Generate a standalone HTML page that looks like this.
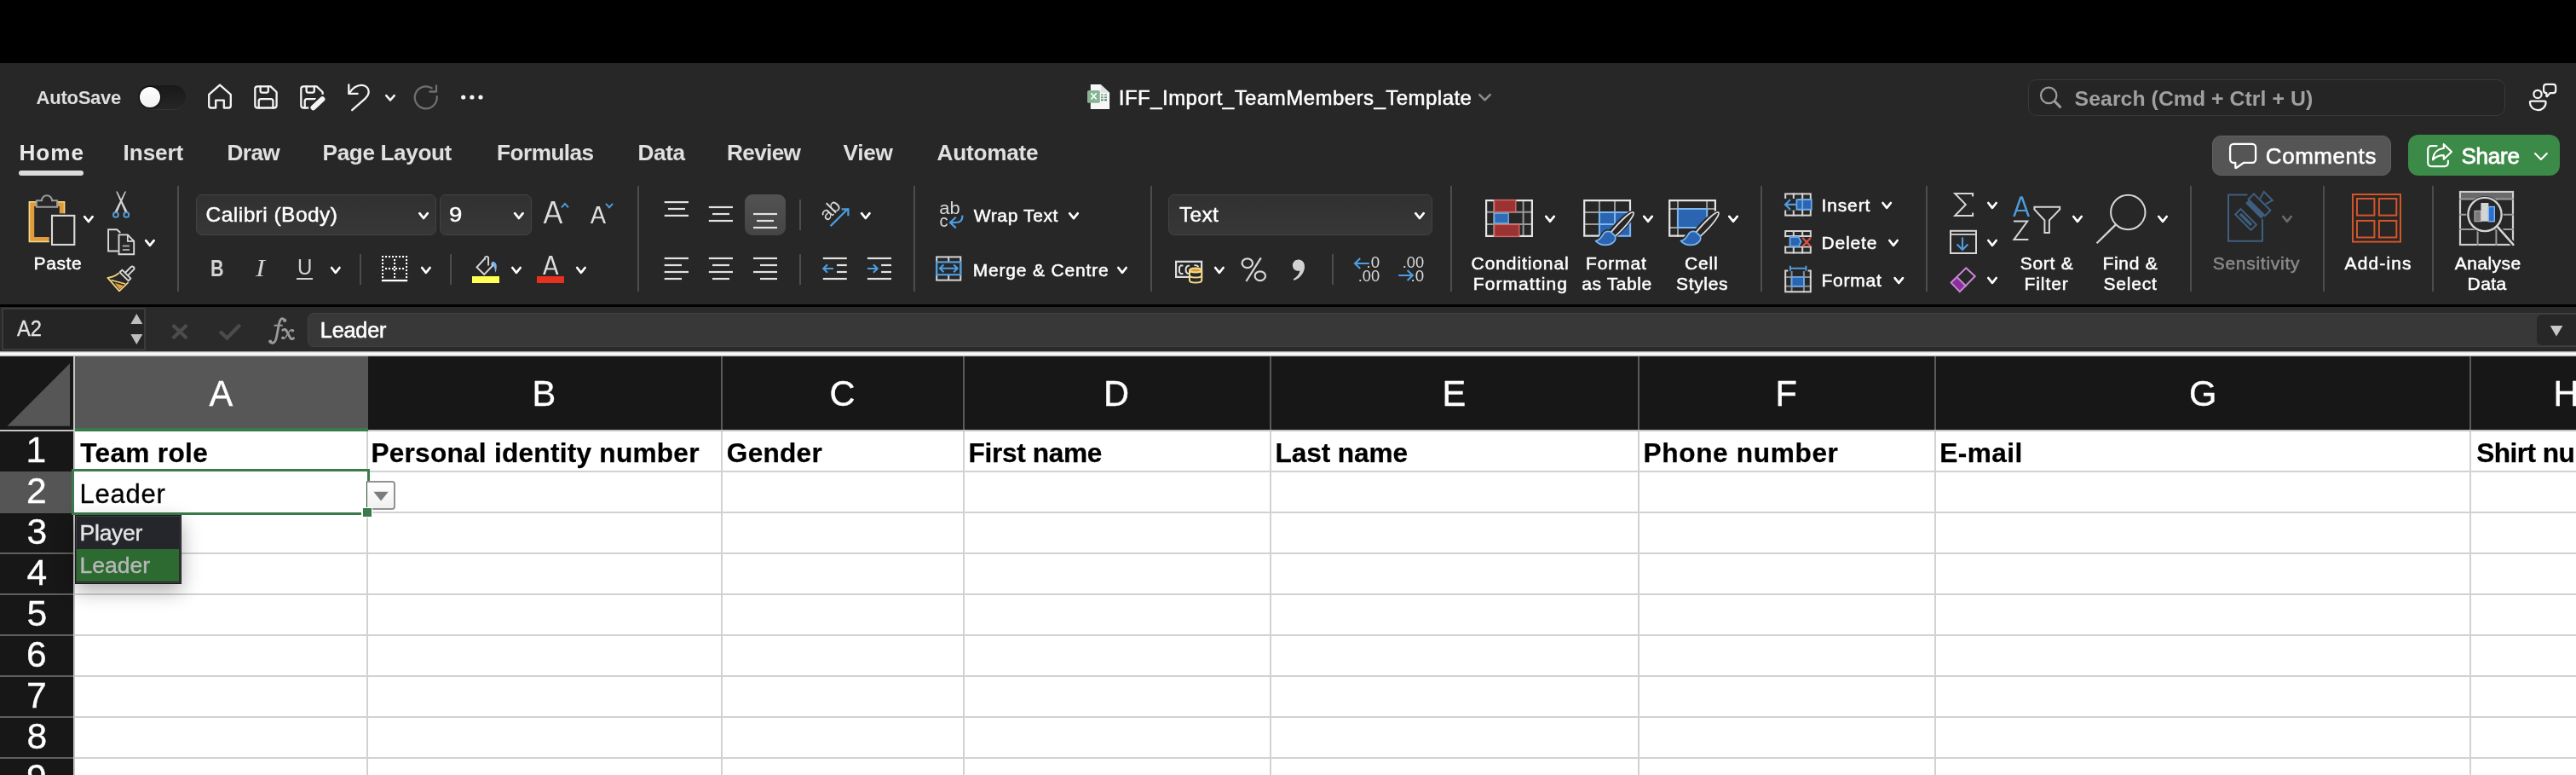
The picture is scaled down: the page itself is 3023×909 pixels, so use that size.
<!DOCTYPE html>
<html><head><meta charset="utf-8"><title>Excel</title>
<style>
html,body{margin:0;padding:0;background:#000;}
body{width:3023px;height:909px;overflow:hidden;font-family:"Liberation Sans",sans-serif;}
#app{will-change:transform;position:relative;width:3023px;height:909px;overflow:hidden;background:#000;}
#app div{position:absolute;box-sizing:border-box;}
.t{white-space:nowrap;margin:0;padding:0;}
#icons{position:absolute;left:0;top:0;}
.vs{width:2px;background:#4d4d4d;top:218px;height:124px;}
.ss{width:2px;background:#4d4d4d;height:36px;}
.dd{background:linear-gradient(#313131,#373737);border:1.5px solid #434343;border-radius:7px;top:228px;height:48px;}
.gv{top:506px;width:2px;height:403px;background:#d2d2d2;}
.gh{left:88px;width:2935px;height:2px;background:#d2d2d2;}
.hv{top:418px;width:2px;height:86px;background:#5a5a5a;}
.rh{left:0;width:86px;height:2px;background:#5e5e5e;}

</style></head>
<body>
<div id="app">
<!-- chrome backgrounds -->
<div style="left:0;top:74px;width:3023px;height:283px;background:#272727;"></div>
<div style="left:0;top:357px;width:3023px;height:3px;background:#000;"></div>
<div style="left:0;top:360px;width:3023px;height:52px;background:#2a2a2a;"></div>
<div style="left:0;top:412px;width:3023px;height:6px;background:linear-gradient(#8c8c8c 0%,#f4f4f4 30%,#ffffff 60%,#b0b0b0 100%);"></div>
<!-- autosave toggle -->
<div style="left:162px;top:100px;width:56px;height:28px;border-radius:14px;background:linear-gradient(#191919 0%,#1e1e1e 45%,#262626 100%);box-shadow:0 1px 0 #343434;"></div>
<div style="left:163.8px;top:101.8px;width:24.4px;height:24.4px;border-radius:50%;background:linear-gradient(#ffffff,#f1f1f1);box-shadow:0 0 0 1.2px rgba(10,10,10,.55),0 1.5px 3px rgba(0,0,0,.5);"></div>
<!-- home underline -->
<div style="left:22px;top:200px;width:76px;height:6px;border-radius:3px;background:#dcdcdc;"></div>
<!-- search -->
<div style="left:2380px;top:92.5px;width:560px;height:43.5px;border-radius:10px;background:#252525;border:1.6px solid #393939;"></div>
<!-- comments / share -->
<div style="left:2596px;top:158.5px;width:210px;height:47px;border-radius:10px;background:#555555;border:1.5px solid #616161;"></div>
<div style="left:2826px;top:158px;width:178px;height:48px;border-radius:12px;background:#3c8a47;"></div>
<!-- ribbon separators -->
<div class="vs" style="left:208px;"></div>
<div class="vs" style="left:748px;"></div>
<div class="vs" style="left:1072px;"></div>
<div class="vs" style="left:1350px;"></div>
<div class="vs" style="left:1702px;"></div>
<div class="vs" style="left:2066px;"></div>
<div class="vs" style="left:2260px;"></div>
<div class="vs" style="left:2570px;"></div>
<div class="vs" style="left:2726px;"></div>
<div class="vs" style="left:2854px;"></div>
<div class="ss" style="left:422px;top:298px;"></div>
<div class="ss" style="left:528px;top:298px;"></div>
<div class="ss" style="left:938px;top:234px;"></div>
<div class="ss" style="left:938px;top:298px;"></div>
<div class="ss" style="left:1563px;top:298px;"></div>
<!-- dropdown boxes -->
<div class="dd" style="left:230px;width:282px;"></div>
<div class="dd" style="left:516px;width:108px;"></div>
<div class="dd" style="left:1371px;width:310px;"></div>
<!-- selected align button -->
<div style="left:874px;top:228px;width:48px;height:48px;border-radius:9px;background:linear-gradient(#525252,#454545);"></div>
<!-- U underline -->
<div style="left:348px;top:326px;width:18.5px;height:2.2px;background:#d2d2d2;"></div>
<!-- fill / font colour bars -->
<div style="left:553.8px;top:323.8px;width:32.5px;height:8.2px;background:#ffff54;"></div>
<div style="left:630px;top:323.8px;width:32.3px;height:8.2px;background:#e8301f;"></div>
<!-- formula bar -->
<div style="left:1.5px;top:361px;width:169px;height:49.5px;background:#252525;border:2px solid #3b3b3b;"></div>
<div style="left:360.6px;top:367px;width:2670px;height:40px;border-radius:7px;background:#383838;border:1px solid #424242;"></div>
<div style="left:2977px;top:369px;width:50px;height:36px;border-radius:6px;background:#272727;"></div>
<!-- grid -->
<div style="left:0;top:418px;width:3023px;height:491px;background:#fff;"></div>
<div style="left:0;top:418px;width:3023px;height:86.5px;background:#171717;"></div>
<div style="left:0;top:418px;width:86px;height:491px;background:#171717;"></div>
<div style="left:88px;top:418px;width:344px;height:84.5px;background:#575757;"></div>
<div style="left:0;top:552.5px;width:86px;height:49.5px;background:#555555;"></div>
<!-- header bottom line -->
<div style="left:0;top:504px;width:3023px;height:2px;background:#c4c4c4;"></div>
<div style="left:88px;top:502px;width:344px;height:4px;background:#3b7a4c;"></div>
<!-- row header right line -->
<div style="left:86px;top:418px;width:2.2px;height:491px;background:#c6c6c6;"></div>
<!-- header verticals -->
<div class="hv" style="left:846px;"></div><div class="hv" style="left:1130px;"></div><div class="hv" style="left:1490px;"></div><div class="hv" style="left:1922px;"></div><div class="hv" style="left:2270px;"></div><div class="hv" style="left:2898px;"></div>
<!-- gridlines -->
<div class="gv" style="left:430px;"></div><div class="gv" style="left:846px;"></div><div class="gv" style="left:1130px;"></div><div class="gv" style="left:1490px;"></div><div class="gv" style="left:1922px;"></div><div class="gv" style="left:2270px;"></div><div class="gv" style="left:2898px;"></div>
<div class="gh" style="top:552px;"></div><div class="gh" style="top:600px;"></div><div class="gh" style="top:648px;"></div><div class="gh" style="top:696px;"></div><div class="gh" style="top:744px;"></div><div class="gh" style="top:792px;"></div><div class="gh" style="top:840px;"></div><div class="gh" style="top:888px;"></div>
<div class="rh" style="top:648px;"></div><div class="rh" style="top:696px;"></div><div class="rh" style="top:744px;"></div><div class="rh" style="top:792px;"></div><div class="rh" style="top:840px;"></div><div class="rh" style="top:888px;"></div>
<!-- selection -->
<div style="left:83.9px;top:549.8px;width:350.1px;height:53.9px;border:3.9px solid #3b7a4c;background:#fff;"></div>
<!-- validation dropdown button -->
<div style="left:430px;top:564.3px;width:33.8px;height:33.3px;border-radius:0 4px 4px 0;background:linear-gradient(#ffffff,#f1f1f1);border:2px solid #939393;border-left:1.2px solid #244d2e;"></div>
<div style="left:424.4px;top:594.6px;width:13px;height:12.6px;background:#fff;"></div>
<div style="left:426px;top:596.2px;width:9.9px;height:9.5px;background:#3b7a4c;"></div>
<!-- dropdown list -->
<div style="left:88.5px;top:604.5px;width:123.2px;height:79.6px;background:#25262b;border:1.6px solid #3d3d3f;box-shadow:0 0 0 1px #1b1b1b,0 8px 22px 1px rgba(0,0,0,0.32);"></div>
<div style="left:90.1px;top:643.8px;width:120px;height:38.7px;background:#2d6a31;"></div>

<svg id="icons" width="3023" height="909" viewBox="0 0 3023 909">
<g fill="none" stroke="#f4f4f4" stroke-width="2.3" stroke-linecap="round" stroke-linejoin="round">
<path d="M258,99.6 L245.2,110.9 V124 Q245.2,126.5 247.7,126.5 H253.2 V117.6 H262.8 V126.5 H268.3 Q270.8,126.5 270.8,124 V110.9 Z"/>
<path d="M302.3,101.3 H317.6 L324.6,108 V123.5 Q324.6,126.5 321.6,126.5 H302.3 Q299.3,126.5 299.3,123.5 V104.3 Q299.3,101.3 302.3,101.3 Z"/>
<path d="M305.6,101.3 V106.6 Q305.6,108.6 307.6,108.6 H312.8 Q314.8,108.6 314.8,106.6 V101.3"/>
<path d="M303.7,126.5 V118.6 Q303.7,116.2 306.1,116.2 H318 Q320.4,116.2 320.4,118.6 V126.5"/>
<path d="M356.3,101.3 H371.6 L378.6,108 V112 M365,126.5 H356.3 Q353.3,126.5 353.3,123.5 V104.3 Q353.3,101.3 356.3,101.3"/>
<path d="M359.6,101.3 V106.6 Q359.6,108.6 361.6,108.6 H366.8 Q368.8,108.6 368.8,106.6 V101.3"/>
<path d="M357.7,126.5 V118.6 Q357.7,116.2 360.1,116.2 H370"/>
<path d="M409.3,99.4 V109.9 H419.6"/>
<path d="M409.8,109.4 C413.5,103.5 418.5,99.9 424.3,99.9 C429.6,99.9 432.7,103.6 432.7,107.6 C432.7,110.8 431.2,113.2 428.3,115.8 L413.2,129.2"/>
</g>
<path d="M378.3,116.3 L367.6,126.2" stroke="#272727" stroke-width="11" stroke-linecap="round" fill="none"/>
<path d="M378.3,116.3 L367.6,126.2" stroke="#f4f4f4" stroke-width="6.2" stroke-linecap="round" fill="none"/>
<path d="M453.3,112.1 L458.0,117.5 L462.7,112.1" fill="none" stroke="#f4f4f4" stroke-width="2.6" stroke-linecap="round" stroke-linejoin="round"/>
<g fill="none" stroke="#6f6f6f" stroke-width="2.3" stroke-linecap="round" stroke-linejoin="round">
<path d="M506.6,103.3 A13,13 0 1 0 512.7,113.2"/>
<path d="M512,100.4 V107.5 H504.4"/>
</g>
<circle cx="543.7" cy="114" r="2.6" fill="#f4f4f4"/>
<circle cx="553.9" cy="114" r="2.6" fill="#f4f4f4"/>
<circle cx="564" cy="114" r="2.6" fill="#f4f4f4"/>
<path d="M1279.8,99 H1291.6 L1302.1,108.7 V128 H1279.8 Z" fill="#f7f7f7"/>
<path d="M1291.6,99 L1302.1,108.7 H1293 Q1291.6,108.7 1291.6,107.3 Z" fill="#e2e2e2"/>
<rect x="1276" y="106.1" width="14.8" height="14.7" rx="1.6" fill="#86b594"/>
<path d="M1280.5,109.3 L1286.7,116.6 M1286.7,109.3 L1280.5,116.6" stroke="#fff" stroke-width="1.6" fill="none"/>
<rect x="1292" y="110.3" width="2.8" height="1.8" fill="#7fb594"/>
<rect x="1292" y="113.4" width="2.8" height="1.8" fill="#5e9d75"/>
<rect x="1292" y="116.4" width="2.8" height="1.8" fill="#4b7c5c"/>
<rect x="1296" y="110.3" width="3" height="1.8" fill="#7fb594"/>
<rect x="1296" y="113.4" width="3" height="1.8" fill="#5e9d75"/>
<rect x="1296" y="116.4" width="3" height="1.8" fill="#4b7c5c"/>
<path d="M1736.3,111.1 L1742.5,117.3 L1748.7,111.1" fill="none" stroke="#8c8c8c" stroke-width="2.6" stroke-linecap="round" stroke-linejoin="round"/>
<circle cx="2404.2" cy="111.9" r="9.2" fill="none" stroke="#9c9c9c" stroke-width="2.2"/>
<path d="M2411.2,118.9 L2417.6,125.4" stroke="#9c9c9c" stroke-width="3" stroke-linecap="round"/>
<g fill="none" stroke="#f4f4f4" stroke-width="2.2" stroke-linejoin="round">
<circle cx="2978" cy="110.4" r="4.6"/>
<path d="M2970.5,118.6 H2986 Q2987.6,118.6 2987.6,120.2 C2987.6,125.2 2983.2,129.2 2978.2,129.2 C2973.3,129.2 2968.9,125.2 2968.9,120.2 Q2968.9,118.6 2970.5,118.6 Z"/>
<path d="M2988.3,98.9 H2996 Q2999.2,98.9 2999.2,102.1 V105.9 Q2999.2,109.1 2996,109.1 H2992.4 L2989.2,113 Q2988.3,113.6 2988.3,112.4 V109.1 Q2985.1,109.1 2985.1,105.9 V102.1 Q2985.1,98.9 2988.3,98.9 Z"/>
</g>
<path d="M2621.1,168.9 H2643.1 a4,4 0 0 1 4,4 V186.8 a4,4 0 0 1 -4,4 H2633.2 L2624.6,196.8 Q2623.3,197.6 2623.3,196 V190.8 H2621.1 a4,4 0 0 1 -4,-4 V172.9 a4,4 0 0 1 4,-4 Z" fill="none" stroke="#fff" stroke-width="2.3" stroke-linejoin="round"/>
<g fill="none" stroke="#fff" stroke-width="2.2" stroke-linecap="round" stroke-linejoin="round">
<path d="M2859.5,171.2 H2853.2 a4,4 0 0 0 -4,4 V191.1 a4,4 0 0 0 4,4 H2868.9 a4,4 0 0 0 4,-4 V188.6"/>
<path d="M2867.8,169.2 L2877,178 L2867.8,186.8 V182.2 C2862,182.2 2858,184 2855,187.4 C2855.6,180 2860,174.6 2867.8,174 Z"/>
</g>
<path d="M2975.0,180.0 L2981.9,187.0 L2988.8,180.0" fill="none" stroke="#fff" stroke-width="2.1" stroke-linecap="round" stroke-linejoin="round"/>
<path d="M33.7,236 H76.2 V250.2 H69.8 V242 H40.2 V277.9 H57.7 V284.1 H33.7 Z" fill="#df9c3c"/>
<path d="M75.5,250.2 V236.7 H34.5 V283.4 H57.7" fill="none" stroke="#f6d98f" stroke-width="1.5"/>
<path d="M42.9,242.7 V235.3 H49 A6,6 0 0 1 61,235.3 H67.1 V242.7 Z" fill="#272727" stroke="#9c9c9c" stroke-width="2"/>
<rect x="61" y="252.9" width="26.3" height="34.1" fill="#272727" stroke="#dadada" stroke-width="2.1"/>
<path d="M99.2,254.2 L103.9,260.0 L108.6,254.2" fill="none" stroke="#ffffff" stroke-width="2.7" stroke-linecap="round" stroke-linejoin="round"/>
<path d="M136.2,224.4 L137.6,224.4 L149.6,248.3 L146.9,249.4 Z" fill="#d4d4d4"/>
<path d="M148,224.4 L146.6,224.4 L134.6,248.3 L137.3,249.4 Z" fill="#d4d4d4"/>
<circle cx="135.9" cy="251.9" r="2.9" fill="none" stroke="#5b9bd5" stroke-width="1.9"/>
<circle cx="148.3" cy="251.9" r="2.9" fill="none" stroke="#5b9bd5" stroke-width="1.9"/>
<path d="M138.6,294.5 H127.1 V269.2 H137.2 L141.3,273" fill="none" stroke="#dadada" stroke-width="1.9"/>
<path d="M139.5,275.4 H149.8 L157.2,282.8 V298.3 H139.5 Z" fill="#272727" stroke="#dadada" stroke-width="1.9" stroke-linejoin="miter"/>
<path d="M149.8,275.4 V282.8 H157.2" fill="none" stroke="#dadada" stroke-width="1.7"/>
<path d="M143.8,288.5 H152 M143.8,293 H152" stroke="#a4a4a4" stroke-width="1.8"/>
<path d="M171.2,282.1 L175.9,287.9 L180.6,282.1" fill="none" stroke="#ffffff" stroke-width="2.7" stroke-linecap="round" stroke-linejoin="round"/>
<path d="M155.2,314.8 L148.4,321.6" stroke="#d8d8d8" stroke-width="6.4" stroke-linecap="round"/>
<path d="M155.2,314.8 L148.4,321.6" stroke="#272727" stroke-width="2.6" stroke-linecap="round"/>
<path d="M143.4,316.6 L153.4,326.6 L150.7,329.4 L140.6,319.3 Z" fill="#272727" stroke="#d8d8d8" stroke-width="1.9" stroke-linejoin="round"/>
<path d="M139.6,320.2 C135.5,323.6 131,325.3 126.4,325.8 L140,341.4 L150.6,331.2" fill="none" stroke="#f2d27f" stroke-width="1.8" stroke-linejoin="round"/>
<path d="M130.4,328.6 L147,333" fill="none" stroke="#f2d27f" stroke-width="1.6"/>
<path d="M134.6,332 L145.2,334.9 L140.2,339.4 Z" fill="#df9c3c"/>
<path d="M492.4,250.2 L497.1,256.0 L501.8,250.2" fill="none" stroke="#ffffff" stroke-width="2.7" stroke-linecap="round" stroke-linejoin="round"/>
<path d="M604.2,250.2 L608.9,256.0 L613.6,250.2" fill="none" stroke="#ffffff" stroke-width="2.7" stroke-linecap="round" stroke-linejoin="round"/>
<polygon points="637.70,262.1 640.70,262.1 649.95,236 646.95,236" fill="#dedede"/>
<polygon points="660.20,262.1 657.20,262.1 647.95,236 650.95,236" fill="#dedede"/>
<rect x="642.28" y="252.30" width="13.33" height="2.2" fill="#dedede"/>
<path d="M659,243.3 L663,238.9 L667,243.3" fill="none" stroke="#4e9de0" stroke-width="2"/>
<polygon points="692.90,262.1 695.60,262.1 702.85,241.9 700.15,241.9" fill="#dedede"/>
<polygon points="711.00,262.1 708.30,262.1 701.05,241.9 703.75,241.9" fill="#dedede"/>
<rect x="696.73" y="254.20" width="10.45" height="2.0" fill="#dedede"/>
<path d="M711,238.9 L715,243.3 L719,238.9" fill="none" stroke="#4e9de0" stroke-width="2"/>
<path d="M389.1,314.0 L393.8,319.8 L398.5,314.0" fill="none" stroke="#ffffff" stroke-width="2.7" stroke-linecap="round" stroke-linejoin="round"/>
<rect x="448" y="300" width="2.1" height="2.1" fill="#fff"/>
<rect x="448" y="304" width="2.1" height="2.1" fill="#fff"/>
<rect x="448" y="308" width="2.1" height="2.1" fill="#fff"/>
<rect x="448" y="312" width="2.1" height="2.1" fill="#fff"/>
<rect x="448" y="316" width="2.1" height="2.1" fill="#fff"/>
<rect x="448" y="320" width="2.1" height="2.1" fill="#fff"/>
<rect x="448" y="324" width="2.1" height="2.1" fill="#fff"/>
<rect x="452" y="300" width="2.1" height="2.1" fill="#fff"/>
<rect x="452" y="314" width="2.1" height="2.1" fill="#fff"/>
<rect x="456" y="300" width="2.1" height="2.1" fill="#fff"/>
<rect x="456" y="314" width="2.1" height="2.1" fill="#fff"/>
<rect x="460" y="300" width="2.1" height="2.1" fill="#fff"/>
<rect x="460" y="314" width="2.1" height="2.1" fill="#fff"/>
<rect x="462" y="304" width="2.1" height="2.1" fill="#fff"/>
<rect x="462" y="308" width="2.1" height="2.1" fill="#fff"/>
<rect x="462" y="312" width="2.1" height="2.1" fill="#fff"/>
<rect x="462" y="316" width="2.1" height="2.1" fill="#fff"/>
<rect x="462" y="320" width="2.1" height="2.1" fill="#fff"/>
<rect x="462" y="324" width="2.1" height="2.1" fill="#fff"/>
<rect x="464" y="300" width="2.1" height="2.1" fill="#fff"/>
<rect x="464" y="314" width="2.1" height="2.1" fill="#fff"/>
<rect x="468" y="300" width="2.1" height="2.1" fill="#fff"/>
<rect x="468" y="314" width="2.1" height="2.1" fill="#fff"/>
<rect x="472" y="300" width="2.1" height="2.1" fill="#fff"/>
<rect x="472" y="314" width="2.1" height="2.1" fill="#fff"/>
<rect x="476" y="300" width="2.1" height="2.1" fill="#fff"/>
<rect x="476" y="304" width="2.1" height="2.1" fill="#fff"/>
<rect x="476" y="308" width="2.1" height="2.1" fill="#fff"/>
<rect x="476" y="312" width="2.1" height="2.1" fill="#fff"/>
<rect x="476" y="316" width="2.1" height="2.1" fill="#fff"/>
<rect x="476" y="320" width="2.1" height="2.1" fill="#fff"/>
<rect x="476" y="324" width="2.1" height="2.1" fill="#fff"/>
<rect x="447.9" y="327.9" width="30.3" height="2.3" fill="#fff"/>
<path d="M495.2,314.0 L499.9,319.8 L504.6,314.0" fill="none" stroke="#ffffff" stroke-width="2.7" stroke-linecap="round" stroke-linejoin="round"/>
<path d="M569.2,303 L559.5,313.5 L568.2,321.8 L578.5,311.2 L576.6,309.2" fill="none" stroke="#d6d6d6" stroke-width="1.9" stroke-linejoin="miter"/>
<path d="M569.1,304.6 V302.6 Q569.1,300.9 571.1,300.9 Q573.1,300.9 573.1,302.6 V311.6" fill="none" stroke="#d6d6d6" stroke-width="1.9"/>
<path d="M576.6,307.2 C578.6,305.8 581.6,307 582.6,310.5 C583.2,313.5 582.3,317.5 581.4,320 C580.9,316.5 580.2,313.4 578.9,311.4 Z" fill="#7ab4e8"/>
<path d="M601.3,314.0 L606.0,319.8 L610.7,314.0" fill="none" stroke="#ffffff" stroke-width="2.7" stroke-linecap="round" stroke-linejoin="round"/>
<polygon points="637.10,322 639.80,322 647.20,300 644.50,300" fill="#dedede"/>
<polygon points="655.50,322 652.80,322 645.40,300 648.10,300" fill="#dedede"/>
<rect x="640.67" y="314.40" width="11.26" height="2.0" fill="#dedede"/>
<path d="M677.2,314.0 L681.9,319.8 L686.6,314.0" fill="none" stroke="#ffffff" stroke-width="2.7" stroke-linecap="round" stroke-linejoin="round"/>
<rect x="779.7" y="236.0" width="28.3" height="2.2" fill="#e2e2e2"/>
<rect x="784.0" y="243.9" width="20.0" height="2.2" fill="#e2e2e2"/>
<rect x="779.7" y="251.8" width="28.3" height="2.2" fill="#e2e2e2"/>
<rect x="831.8" y="241.9" width="28.2" height="2.2" fill="#e2e2e2"/>
<rect x="836.0" y="249.9" width="20.0" height="2.2" fill="#e2e2e2"/>
<rect x="831.8" y="257.9" width="28.2" height="2.2" fill="#e2e2e2"/>
<rect x="884.0" y="249.9" width="28.0" height="2.2" fill="#e2e2e2"/>
<rect x="888.0" y="257.9" width="20.0" height="2.2" fill="#e2e2e2"/>
<rect x="884.0" y="265.9" width="28.0" height="2.2" fill="#e2e2e2"/>
<rect x="779.7" y="301.9" width="28.3" height="2.2" fill="#e2e2e2"/>
<rect x="779.7" y="309.9" width="20.3" height="2.2" fill="#e2e2e2"/>
<rect x="779.7" y="317.9" width="28.3" height="2.2" fill="#e2e2e2"/>
<rect x="779.7" y="325.9" width="20.3" height="2.2" fill="#e2e2e2"/>
<rect x="831.8" y="301.9" width="28.2" height="2.2" fill="#e2e2e2"/>
<rect x="836.0" y="309.9" width="20.0" height="2.2" fill="#e2e2e2"/>
<rect x="831.8" y="317.9" width="28.2" height="2.2" fill="#e2e2e2"/>
<rect x="836.0" y="325.9" width="20.0" height="2.2" fill="#e2e2e2"/>
<rect x="884.0" y="301.9" width="28.0" height="2.2" fill="#e2e2e2"/>
<rect x="892.0" y="309.9" width="20.0" height="2.2" fill="#e2e2e2"/>
<rect x="884.0" y="317.9" width="28.0" height="2.2" fill="#e2e2e2"/>
<rect x="892.0" y="325.9" width="20.0" height="2.2" fill="#e2e2e2"/>
<text transform="translate(970.6,260) rotate(-45)" font-family="Liberation Sans" font-size="22" fill="#d8d8d8">ab</text>
<path d="M974.6,265.1 L995.2,244.8 M987.6,245.4 H995.4 V253.2" fill="none" stroke="#4e9de0" stroke-width="2.2"/>
<path d="M1011.1,250.2 L1015.8,256.0 L1020.5,250.2" fill="none" stroke="#ffffff" stroke-width="2.7" stroke-linecap="round" stroke-linejoin="round"/>
<rect x="965.8" y="301.9" width="28.0" height="2.2" fill="#e2e2e2"/>
<rect x="965.8" y="325.9" width="28.0" height="2.2" fill="#e2e2e2"/>
<rect x="982.0" y="309.9" width="11.8" height="2.2" fill="#e2e2e2"/>
<rect x="982.0" y="317.9" width="11.8" height="2.2" fill="#e2e2e2"/>
<path d="M978.0,315 H966.5999999999999 M971.0,310.2 L966.3,315 L971.0,319.8" fill="none" stroke="#4e9de0" stroke-width="2.1"/>
<rect x="1017.9" y="301.9" width="28.100000000000023" height="2.2" fill="#e2e2e2"/>
<rect x="1017.9" y="325.9" width="28.100000000000023" height="2.2" fill="#e2e2e2"/>
<rect x="1034.1" y="309.9" width="11.900000000000023" height="2.2" fill="#e2e2e2"/>
<rect x="1034.1" y="317.9" width="11.900000000000023" height="2.2" fill="#e2e2e2"/>
<path d="M1017.9,315 H1029.4 M1024.9,310.2 L1029.7,315 L1024.9,319.8" fill="none" stroke="#4e9de0" stroke-width="2.1"/>
<text x="1102.2" y="251" font-family="Liberation Sans" font-size="20" fill="#d8d8d8" textLength="24.5" lengthAdjust="spacingAndGlyphs">ab</text>
<text x="1102.4" y="265.8" font-family="Liberation Sans" font-size="20" fill="#d8d8d8">c</text>
<path d="M1129.2,252.6 C1130,258.2 1127,261 1121.5,261 H1115.5 M1121.8,254.8 L1115,261 L1121.8,267.4" fill="none" stroke="#4e9de0" stroke-width="2.2"/>
<path d="M1255.3,250.3 L1260.0,256.1 L1264.7,250.3" fill="none" stroke="#ffffff" stroke-width="2.7" stroke-linecap="round" stroke-linejoin="round"/>
<rect x="1099.2" y="301.4" width="28.1" height="27.2" fill="none" stroke="#d6d6d6" stroke-width="2"/>
<path d="M1113.2,301.4 V328.6" stroke="#d6d6d6" stroke-width="2"/>
<rect x="1099.3" y="307.4" width="27.9" height="14.8" fill="#272727" stroke="#4e9de0" stroke-width="2.2"/>
<path d="M1103,314.8 H1123.6 M1107.4,310.4 L1102.9,314.8 L1107.4,319.2 M1119.2,310.4 L1123.7,314.8 L1119.2,319.2" fill="none" stroke="#4e9de0" stroke-width="2.1"/>
<path d="M1312.3,314.0 L1317.0,319.8 L1321.7,314.0" fill="none" stroke="#ffffff" stroke-width="2.7" stroke-linecap="round" stroke-linejoin="round"/>
<path d="M1661.3,250.2 L1666.0,256.0 L1670.7,250.2" fill="none" stroke="#ffffff" stroke-width="2.7" stroke-linecap="round" stroke-linejoin="round"/>
<rect x="1380.1" y="306.8" width="30" height="18.1" fill="none" stroke="#dedede" stroke-width="2.2"/>
<path d="M1388.4,311.4 H1385.6 L1384,313.4 V319 L1385.6,321 H1388.4" fill="none" stroke="#dedede" stroke-width="2"/>
<path d="M1396,311.6 C1392.6,311.8 1391.6,314.4 1391.6,316.2 C1391.6,318.4 1392.6,320.6 1395,321" fill="none" stroke="#dedede" stroke-width="2"/>
<path d="M1401.4,311.2 C1403.8,310.8 1405.6,311.6 1406.6,313" fill="none" stroke="#dedede" stroke-width="1.8"/>
<path d="M1395,317 V329 A8.1,3.2 0 0 0 1411.2,329 V317 Z" fill="#272727"/>
<ellipse cx="1403.1" cy="317" rx="7.1" ry="2.5" fill="#e09a30" stroke="#f5d98a" stroke-width="2"/>
<path d="M1396,317 V329 A7.1,2.6 0 0 0 1410.2,329 V317 M1396,323 A7.1,2.6 0 0 0 1410.2,323" fill="none" stroke="#f5d98a" stroke-width="2"/>
<path d="M1426.2,314.0 L1430.9,319.8 L1435.6,314.0" fill="none" stroke="#ffffff" stroke-width="2.7" stroke-linecap="round" stroke-linejoin="round"/>
<g fill="none" stroke="#d8d8d8" stroke-width="2.2">
<ellipse cx="1463.8" cy="308.7" rx="6.2" ry="5.4"/>
<ellipse cx="1478.8" cy="323.7" rx="6.2" ry="5.4"/>
<path d="M1479.8,302.4 L1462.4,330"/>
</g>
<path d="M1516.9,311.2 C1516.9,307.2 1519.9,304.4 1523.9,304.4 C1528.4,304.4 1531,308 1531,312.6 C1531,320.4 1525.4,326.4 1518.6,329 L1517.8,327.2 C1522,325 1524.8,321.8 1525.4,317.6 C1520.6,318.6 1516.9,315.4 1516.9,311.2 Z" fill="#d2d2d2"/>
<text x="1603.6" y="313.7" font-family="Liberation Sans" font-size="17.6" fill="#dcdcdc" textLength="15.6" lengthAdjust="spacingAndGlyphs">.0</text>
<text x="1593.8" y="330" font-family="Liberation Sans" font-size="17.6" fill="#dcdcdc" textLength="25.4" lengthAdjust="spacingAndGlyphs">.00</text>
<path d="M1606.8,309 H1590.2 M1596.2,303 L1590,309 L1596.2,315" fill="none" stroke="#4e9de0" stroke-width="2.1"/>
<text x="1645.8" y="313.7" font-family="Liberation Sans" font-size="17.6" fill="#dcdcdc" textLength="25.4" lengthAdjust="spacingAndGlyphs">.00</text>
<text x="1655.6" y="330" font-family="Liberation Sans" font-size="17.6" fill="#dcdcdc" textLength="15.6" lengthAdjust="spacingAndGlyphs">.0</text>
<path d="M1641.2,323 H1657.6 M1651.6,317 L1657.8,323 L1651.6,329" fill="none" stroke="#4e9de0" stroke-width="2.1"/>
<path d="M1753.3,234 V278 M1787.6,234 V278 M1743,248.8 H1799 M1743,263 H1799" stroke="#9a9a9a" stroke-width="2" fill="none"/>
<rect x="1744.1" y="235.1" width="53.8" height="41.8" fill="none" stroke="#e4e4e4" stroke-width="2.2"/>
<rect x="1753.6" y="234.6" width="25.2" height="14" fill="#9c3333" stroke="#d46a6a" stroke-width="1.4"/>
<rect x="1753.6" y="263.4" width="29.2" height="14" fill="#9c3333" stroke="#d46a6a" stroke-width="1.4"/>
<rect x="1753.6" y="250.2" width="16.6" height="11.6" fill="#2f6cb5" stroke="#6fb0e8" stroke-width="1.4"/>
<path d="M1814.3,253.9 L1819.0,259.7 L1823.7,253.9" fill="none" stroke="#ffffff" stroke-width="2.7" stroke-linecap="round" stroke-linejoin="round"/>
<rect x="1876.9" y="248.9" width="37.2" height="28.9" fill="#2b64b0"/>
<path d="M1876.9,234 V248.9 M1895,234 V248.9 M1858,248.9 H1876.9 M1858,262.9 H1876.9" stroke="#9a9a9a" stroke-width="2" fill="none"/>
<path d="M1876.9,277.8 V248.9 H1914.1 M1895,248.9 V277.8 M1876.9,262.9 H1914.1 M1913.1,248.9 V277.8 M1876.9,276.8 H1914.1" stroke="#7fb7ee" stroke-width="2" fill="none"/>
<path d="M1876.9,276.7 H1859.2 V235.1 H1913 V248.9" fill="none" stroke="#e4e4e4" stroke-width="2.2"/>
<path d="M1916.6,249 C1919.5,250.5 1912,262 1894.5,277.5 C1898,283 1892,289 1883,288.4 C1878,288 1873.5,285.6 1871,282.6 C1877,281.6 1879,278.6 1881,275 C1883,272 1886.6,270.8 1889.6,271.6 C1901,258 1913.5,247.6 1916.6,249 Z" fill="#272727" stroke="#272727" stroke-width="4.4" stroke-linejoin="round"/>
<path d="M1916.6,249 C1919.2,250.8 1911,263 1895.4,277.2 L1890.6,272.4 C1902,258.4 1913.8,247.8 1916.6,249 Z" fill="#272727" stroke="#dedede" stroke-width="1.7" stroke-linejoin="round"/>
<path d="M1890.2,272 C1886.6,270.8 1883,272.2 1881.2,275.2 C1879.4,278.6 1877.4,281.6 1872.6,282.6 C1875.4,285.6 1879,287.2 1883.4,287.4 C1891.4,287.8 1897.4,282.6 1895.4,277 Z" fill="#2b64b0" stroke="#7fb7ee" stroke-width="1.7" stroke-linejoin="round"/>
<path d="M1929.3,253.9 L1934.0,259.7 L1938.7,253.9" fill="none" stroke="#ffffff" stroke-width="2.7" stroke-linecap="round" stroke-linejoin="round"/>
<path d="M1969,234 V278 M2003.1,234 V250 M1958,245 H2014 M1958,267 H1990" stroke="#9a9a9a" stroke-width="2" fill="none"/>
<path d="M1990,276.7 H1959.2 V235.1 H2012.9 V250" fill="none" stroke="#e4e4e4" stroke-width="2.2"/>
<rect x="1968.9" y="245" width="34.3" height="22" fill="#2b64b0" stroke="#7fb7ee" stroke-width="2"/>
<path d="M2016.5,249 C2019.4,250.5 2011.9,262 1994.4,277.5 C1997.9,283 1991.9,289 1982.9,288.4 C1977.9,288 1973.4,285.6 1970.9,282.6 C1976.9,281.6 1978.9,278.6 1980.9,275 C1982.9,272 1986.5,270.8 1989.5,271.6 C2000.9,258 2013.4,247.6 2016.5,249 Z" fill="#272727" stroke="#272727" stroke-width="4.4" stroke-linejoin="round"/>
<path d="M2016.5,249 C2019.1000000000001,250.8 2010.9,263 1995.3000000000002,277.2 L1990.5,272.4 C2001.9,258.4 2013.7,247.8 2016.5,249 Z" fill="#272727" stroke="#dedede" stroke-width="1.7" stroke-linejoin="round"/>
<path d="M1990.1000000000001,272 C1986.5,270.8 1982.9,272.2 1981.1000000000001,275.2 C1979.3000000000002,278.6 1977.3000000000002,281.6 1972.5,282.6 C1975.3000000000002,285.6 1978.9,287.2 1983.3000000000002,287.4 C1991.3000000000002,287.8 1997.3000000000002,282.6 1995.3000000000002,277 Z" fill="#2b64b0" stroke="#7fb7ee" stroke-width="1.7" stroke-linejoin="round"/>
<path d="M2029.3,253.9 L2034.0,259.7 L2038.7,253.9" fill="none" stroke="#ffffff" stroke-width="2.7" stroke-linecap="round" stroke-linejoin="round"/>
<rect x="2095.2" y="227.4" width="29.600000000000364" height="25.19999999999999" fill="none" stroke="#d6d6d6" stroke-width="2"/>
<path d="M2104.8,226.4 V253.6 M2115.2,226.4 V253.6 M2094.2,234.3 H2125.8 M2094.2,245.5 H2125.8 " stroke="#d6d6d6" stroke-width="2" fill="none"/>
<rect x="2094" y="233" width="16" height="13.6" fill="#272727"/>
<rect x="2108.4" y="234.2" width="17.4" height="11.4" fill="#2b64b0" stroke="#6aa9e9" stroke-width="1.8"/>
<path d="M2115.2,234.2 V245.6" stroke="#6aa9e9" stroke-width="1.8"/>
<path d="M2108.6,239.9 H2095.4 M2101,234 L2095,239.9 L2101,245.8" fill="none" stroke="#4e9de0" stroke-width="2.2"/>
<path d="M2209.5,238.0 L2214.2,243.8 L2218.9,238.0" fill="none" stroke="#ffffff" stroke-width="2.7" stroke-linecap="round" stroke-linejoin="round"/>
<rect x="2095.2" y="271" width="29.600000000000364" height="25.5" fill="none" stroke="#d6d6d6" stroke-width="2"/>
<path d="M2104.8,270 V297.5 M2115.2,270 V297.5 M2094.2,277 H2125.8 M2094.2,289.6 H2125.8 " stroke="#d6d6d6" stroke-width="2" fill="none"/>
<rect x="2093" y="278.2" width="34" height="10.4" fill="#272727"/>
<path d="M2100.6,278 H2110.6 L2113.6,283.5 L2110.6,289 H2100.6 Z" fill="#2b64b0" stroke="#6aa9e9" stroke-width="1.8"/>
<path d="M2115.4,278.9 L2124.8,288.9 M2124.8,278.9 L2115.4,288.9" stroke="#e0534a" stroke-width="2.2" fill="none"/>
<path d="M2217.3,282.0 L2222.0,287.8 L2226.7,282.0" fill="none" stroke="#ffffff" stroke-width="2.7" stroke-linecap="round" stroke-linejoin="round"/>
<path d="M2102.6,318 V343.3 M2116.9,318 V343.3 M2094.2,324.9 H2125.8 M2094.2,335.8 H2125.8" stroke="#8c8c8c" stroke-width="2" fill="none"/>
<path d="M2098.4,317.5 H2095.2 V342.3 H2124.8 V317.5 H2121.6" fill="none" stroke="#d6d6d6" stroke-width="2"/>
<rect x="2102.6" y="324.9" width="14.3" height="10.9" fill="#2b64b0" stroke="#6aa9e9" stroke-width="1.8"/>
<path d="M2100.4,314.8 H2119.9 M2100.9,311.8 V317.8 M2119.4,311.8 V317.8" stroke="#4e9de0" stroke-width="2" fill="none"/>
<path d="M2223.6,326.1 L2228.3,331.9 L2233.0,326.1" fill="none" stroke="#ffffff" stroke-width="2.7" stroke-linecap="round" stroke-linejoin="round"/>
<path d="M2315.1,230.4 V226.9 H2294.2 L2306.8,239.9 L2294.2,253 H2315.1 V249.4" fill="none" stroke="#d6d6d6" stroke-width="2" stroke-linejoin="miter"/>
<path d="M2333.3,238.0 L2338.0,243.8 L2342.7,238.0" fill="none" stroke="#ffffff" stroke-width="2.7" stroke-linecap="round" stroke-linejoin="round"/>
<rect x="2289" y="270.8" width="30" height="26.2" fill="none" stroke="#d6d6d6" stroke-width="2"/>
<path d="M2289,274.9 H2319" stroke="#d6d6d6" stroke-width="1.8"/>
<path d="M2303,278.6 V292.6 M2296.6,286.6 L2303,293 L2309.4,286.6" fill="none" stroke="#4e9de0" stroke-width="2.1"/>
<path d="M2333.3,282.0 L2338.0,287.8 L2342.7,282.0" fill="none" stroke="#ffffff" stroke-width="2.7" stroke-linecap="round" stroke-linejoin="round"/>
<path d="M2296.2,324.6 L2307.6,336 L2299.8,342 L2289.6,331.6 Z" fill="#8b2e9e"/>
<path d="M2307.2,314.3 L2317.7,324 L2299.8,342.1 L2289.6,331.6 Z M2296.2,324.6 L2307.6,336" fill="none" stroke="#c88ad6" stroke-width="2" stroke-linejoin="miter"/>
<path d="M2333.3,326.0 L2338.0,331.8 L2342.7,326.0" fill="none" stroke="#ffffff" stroke-width="2.7" stroke-linecap="round" stroke-linejoin="round"/>
<polygon points="2362.20,253.9 2364.80,253.9 2373.00,230.4 2370.40,230.4" fill="#4e9de0"/>
<polygon points="2382.00,253.9 2379.40,253.9 2371.20,230.4 2373.80,230.4" fill="#4e9de0"/>
<rect x="2365.91" y="246.00" width="12.38" height="2.0" fill="#4e9de0"/>
<path d="M2363,259.6 H2379.2 L2363.4,281.1 H2380.4" fill="none" stroke="#d6d6d6" stroke-width="2" stroke-linejoin="miter"/>
<path d="M2387.4,242.8 H2417.2 V245.6 L2404.9,258.4 V273 H2399.4 V258.4 L2387.4,245.6 Z" fill="none" stroke="#d6d6d6" stroke-width="2" stroke-linejoin="miter"/>
<path d="M2433.3,254.0 L2438.0,259.8 L2442.7,254.0" fill="none" stroke="#ffffff" stroke-width="2.7" stroke-linecap="round" stroke-linejoin="round"/>
<circle cx="2497.3" cy="249" r="20.2" fill="none" stroke="#d6d6d6" stroke-width="2"/>
<path d="M2483,263.4 L2460.6,285.2" stroke="#d6d6d6" stroke-width="2.2" fill="none"/>
<path d="M2533.3,254.0 L2538.0,259.8 L2542.7,254.0" fill="none" stroke="#ffffff" stroke-width="2.7" stroke-linecap="round" stroke-linejoin="round"/>
<path d="M2637.4,228.5 H2615 V282.8 H2655 V257" fill="none" stroke="#3f5f80" stroke-width="2"/>
<g transform="translate(2651.5,240.2) rotate(45)"><rect x="-13.7" y="-4.5" width="27.4" height="9" fill="none" stroke="#3f5f80" stroke-width="2"/><rect x="-13" y="5.2" width="26" height="5" fill="#3f5f80"/><rect x="-12.1" y="19" width="26" height="9" fill="none" stroke="#3f5f80" stroke-width="2"/><rect x="-8.4" y="21.8" width="18.6" height="3.4" fill="#3f5f80"/><path d="M-4.5,-5.5 L-7.2,-14.6 H7.2 L4.5,-5.5" fill="none" stroke="#3f5f80" stroke-width="2" stroke-linejoin="miter"/></g>
<path d="M2679.3,254.0 L2684.0,259.8 L2688.7,254.0" fill="none" stroke="#6a6a6a" stroke-width="2.7" stroke-linecap="round" stroke-linejoin="round"/>
<rect x="2761" y="228" width="56" height="55.6" fill="none" stroke="#d4552a" stroke-width="2"/>
<rect x="2766" y="233" width="20.4" height="19.6" fill="none" stroke="#d4552a" stroke-width="2"/>
<rect x="2766" y="258.9" width="20.4" height="19.6" fill="none" stroke="#d4552a" stroke-width="2"/>
<rect x="2791.9" y="233" width="20.4" height="19.6" fill="none" stroke="#d4552a" stroke-width="2"/>
<rect x="2791.9" y="258.9" width="20.4" height="19.6" fill="none" stroke="#d4552a" stroke-width="2"/>
<rect x="2887" y="225" width="62" height="62" fill="none" stroke="#cfcfcf" stroke-width="2.2"/>
<rect x="2888" y="226" width="60" height="7" fill="#6a6a6a"/>
<path d="M2886,233.6 H2950 M2886,251.8 H2950 M2886,269 H2950 M2907.6,233.6 V288 M2929.4,233.6 V288" stroke="#9c9c9c" stroke-width="2" fill="none"/>
<circle cx="2916" cy="251.5" r="21.6" fill="#272727"/>
<path d="M2931.2,266.4 L2949.4,286.8" stroke="#272727" stroke-width="6" fill="none"/>
<path d="M2931.2,266.4 L2949.4,286.8" stroke="#d4d4d4" stroke-width="2.6" fill="none" stroke-linecap="round"/>
<circle cx="2916" cy="251.5" r="19.6" fill="#272727" stroke="#d4d4d4" stroke-width="2.4"/>
<rect x="2904" y="247.4" width="7.4" height="12.3" fill="#7a7a7a" stroke="#a8a8a8" stroke-width="1.2"/>
<rect x="2911.4" y="238" width="9" height="21.7" fill="#d4d4d4"/>
<rect x="2920.4" y="242.5" width="6.9" height="17.2" fill="#2b6fd0" stroke="#7fb7ee" stroke-width="1.4"/>
<path d="M153.3,380 L160.3,368 L167.3,380 Z M153.3,392 L160.3,404 L167.3,392 Z" fill="#bdbdbd"/>
<path d="M202.8,381.2 L219.2,396.8 M219.2,381.2 L202.8,396.8" stroke="#4c4c4c" stroke-width="4.2" fill="none"/>
<path d="M258.2,388.8 L266.4,396.6 L281.6,381" stroke="#4c4c4c" stroke-width="4.2" fill="none"/>
<path d="M2992.7,382 H3007.4 L3000,394.6 Z" fill="#c8c8c8"/>
<path d="M82,426.3 V499.8 H8.5 Z" fill="#565656"/>
<path d="M438.4,576.8 H455.8 L447.1,587.4 Z" fill="#7c7c7c"/>
<g fill="none" stroke="#9a9a9a" stroke-linecap="round" stroke-linejoin="round">
<path d="M334.2,375.8 C333.4,373.5 330.9,373.1 329.5,374.7 C328.1,376.3 327.6,379 327,382 L324.7,394.4 C324,398 323,401.4 320.6,402.1 C318.9,402.5 317.5,401.8 317.1,400.6" stroke-width="2.8"/>
<path d="M321.6,381.7 H331.7" stroke-width="2" stroke-linecap="butt"/>
<path d="M331.8,387.1 C333.8,385.7 335.6,386.4 336.6,388.6 L340.2,395.6 C341.2,397.6 342.7,398.3 344.6,396.7" stroke-width="2.9"/>
<path d="M343.4,387.6 C342,386.2 340.6,387 339.4,388.8 L335.6,394.8 C334.4,396.8 332.9,397.7 331.8,396.4" stroke-width="1.5"/>
</g>
<circle cx="334.2" cy="375.9" r="2.1" fill="#9a9a9a"/>
<circle cx="317.2" cy="400.5" r="2.1" fill="#9a9a9a"/>
<circle cx="343.4" cy="387.7" r="1.8" fill="#9a9a9a"/>
<circle cx="331.9" cy="396.3" r="1.8" fill="#9a9a9a"/>
</svg>
<div class="t" style="left:42.60px;top:102.00px;font:700 22px/25px 'Liberation Sans', sans-serif;color:#dedede;letter-spacing:-0.262px;">AutoSave</div>
<div class="t" style="left:1312.80px;top:101.00px;font:400 24px/27px 'Liberation Sans', sans-serif;color:#ffffff;letter-spacing:0.467px;-webkit-text-stroke:0.5px #ffffff;">IFF_Import_TeamMembers_Template</div>
<div class="t" style="left:2434.60px;top:102.00px;font:700 24.8px/27px 'Liberation Sans', sans-serif;color:#a0a0a0;letter-spacing:0.055px;">Search (Cmd + Ctrl + U)</div>
<div class="t" style="left:22.40px;top:164.00px;font:700 26.2px/30px 'Liberation Sans', sans-serif;color:#e8e8e8;letter-spacing:1.002px;">Home</div>
<div class="t" style="left:144.60px;top:164.00px;font:700 26.2px/30px 'Liberation Sans', sans-serif;color:#e0e0e0;letter-spacing:-0.118px;">Insert</div>
<div class="t" style="left:266.60px;top:164.00px;font:700 26.2px/30px 'Liberation Sans', sans-serif;color:#e0e0e0;letter-spacing:-0.656px;">Draw</div>
<div class="t" style="left:378.60px;top:164.00px;font:700 26.2px/30px 'Liberation Sans', sans-serif;color:#e0e0e0;letter-spacing:-0.399px;">Page Layout</div>
<div class="t" style="left:583.10px;top:164.00px;font:700 26.2px/30px 'Liberation Sans', sans-serif;color:#e0e0e0;letter-spacing:-0.544px;">Formulas</div>
<div class="t" style="left:748.60px;top:164.00px;font:700 26.2px/30px 'Liberation Sans', sans-serif;color:#e0e0e0;letter-spacing:-0.399px;">Data</div>
<div class="t" style="left:853.10px;top:164.00px;font:700 26.2px/30px 'Liberation Sans', sans-serif;color:#e0e0e0;letter-spacing:-0.676px;">Review</div>
<div class="t" style="left:989.60px;top:164.00px;font:700 26.2px/30px 'Liberation Sans', sans-serif;color:#e0e0e0;letter-spacing:-0.278px;">View</div>
<div class="t" style="left:1099.60px;top:164.00px;font:700 26.2px/30px 'Liberation Sans', sans-serif;color:#e0e0e0;letter-spacing:-0.242px;">Automate</div>
<div class="t" style="left:2658.80px;top:168.00px;font:400 26px/30px 'Liberation Sans', sans-serif;color:#fff;letter-spacing:0.558px;-webkit-text-stroke:0.55px #fff;">Comments</div>
<div class="t" style="left:2888.40px;top:168.00px;font:400 26px/30px 'Liberation Sans', sans-serif;color:#fff;letter-spacing:-0.180px;-webkit-text-stroke:0.8px #fff;">Share</div>
<div class="t" style="left:39.60px;top:297.00px;font:400 21px/23px 'Liberation Sans', sans-serif;color:#ffffff;letter-spacing:0.570px;-webkit-text-stroke:0.5px #ffffff;">Paste</div>
<div class="t" style="left:241.60px;top:238.00px;font:400 24.5px/27px 'Liberation Sans', sans-serif;color:#ffffff;letter-spacing:0.458px;-webkit-text-stroke:0.45px #ffffff;">Calibri (Body)</div>
<div class="t" style="left:527.38px;top:238.00px;font:400 24.5px/27px 'Liberation Sans', sans-serif;color:#ffffff;letter-spacing:0.000px;transform:scaleX(1.125);transform-origin:0 0;-webkit-text-stroke:0.45px #ffffff;">9</div>
<div class="t" style="left:246.72px;top:299.00px;font:700 27.5px/31px 'Liberation Sans', sans-serif;color:#d2d2d2;letter-spacing:0.000px;transform:scaleX(0.783);transform-origin:0 0;">B</div>
<div class="t" style="left:300.13px;top:298.00px;font:italic 400 29px/32px 'Liberation Serif', serif;color:#d2d2d2;letter-spacing:0.000px;transform:scaleX(1.133);transform-origin:0 0;">I</div>
<div class="t" style="left:348.64px;top:299.00px;font:400 25px/28px 'Liberation Sans', sans-serif;color:#d2d2d2;letter-spacing:0.000px;transform:scaleX(0.962);transform-origin:0 0;">U</div>
<div class="t" style="left:1142.70px;top:241.00px;font:400 21px/23px 'Liberation Sans', sans-serif;color:#ffffff;letter-spacing:0.624px;-webkit-text-stroke:0.5px #ffffff;">Wrap Text</div>
<div class="t" style="left:1141.70px;top:305.00px;font:400 21px/23px 'Liberation Sans', sans-serif;color:#ffffff;letter-spacing:0.827px;-webkit-text-stroke:0.5px #ffffff;">Merge &amp; Centre</div>
<div class="t" style="left:1384.00px;top:238.00px;font:400 24.5px/27px 'Liberation Sans', sans-serif;color:#ffffff;letter-spacing:0.291px;-webkit-text-stroke:0.45px #ffffff;">Text</div>
<div class="t" style="left:1726.60px;top:297.00px;font:400 21px/23px 'Liberation Sans', sans-serif;color:#ffffff;letter-spacing:0.899px;-webkit-text-stroke:0.5px #ffffff;">Conditional</div>
<div class="t" style="left:1728.80px;top:321.00px;font:400 21px/23px 'Liberation Sans', sans-serif;color:#ffffff;letter-spacing:1.079px;-webkit-text-stroke:0.5px #ffffff;">Formatting</div>
<div class="t" style="left:1861.00px;top:297.00px;font:400 21px/23px 'Liberation Sans', sans-serif;color:#ffffff;letter-spacing:0.866px;-webkit-text-stroke:0.5px #ffffff;">Format</div>
<div class="t" style="left:1856.30px;top:321.00px;font:400 21px/23px 'Liberation Sans', sans-serif;color:#ffffff;letter-spacing:0.595px;-webkit-text-stroke:0.5px #ffffff;">as Table</div>
<div class="t" style="left:1977.00px;top:297.00px;font:400 21px/23px 'Liberation Sans', sans-serif;color:#ffffff;letter-spacing:0.830px;-webkit-text-stroke:0.5px #ffffff;">Cell</div>
<div class="t" style="left:1967.00px;top:321.00px;font:400 21px/23px 'Liberation Sans', sans-serif;color:#ffffff;letter-spacing:0.663px;-webkit-text-stroke:0.5px #ffffff;">Styles</div>
<div class="t" style="left:2137.50px;top:229.00px;font:400 21px/23px 'Liberation Sans', sans-serif;color:#ffffff;letter-spacing:0.863px;-webkit-text-stroke:0.5px #ffffff;">Insert</div>
<div class="t" style="left:2137.50px;top:273.00px;font:400 21px/23px 'Liberation Sans', sans-serif;color:#ffffff;letter-spacing:0.855px;-webkit-text-stroke:0.5px #ffffff;">Delete</div>
<div class="t" style="left:2137.50px;top:317.00px;font:400 21px/23px 'Liberation Sans', sans-serif;color:#ffffff;letter-spacing:0.766px;-webkit-text-stroke:0.5px #ffffff;">Format</div>
<div class="t" style="left:2370.70px;top:297.00px;font:400 21px/23px 'Liberation Sans', sans-serif;color:#ffffff;letter-spacing:0.730px;-webkit-text-stroke:0.5px #ffffff;">Sort &amp;</div>
<div class="t" style="left:2375.60px;top:321.00px;font:400 21px/23px 'Liberation Sans', sans-serif;color:#ffffff;letter-spacing:0.886px;-webkit-text-stroke:0.5px #ffffff;">Filter</div>
<div class="t" style="left:2467.40px;top:297.00px;font:400 21px/23px 'Liberation Sans', sans-serif;color:#ffffff;letter-spacing:0.723px;-webkit-text-stroke:0.5px #ffffff;">Find &amp;</div>
<div class="t" style="left:2468.40px;top:321.00px;font:400 21px/23px 'Liberation Sans', sans-serif;color:#ffffff;letter-spacing:0.814px;-webkit-text-stroke:0.5px #ffffff;">Select</div>
<div class="t" style="left:2596.70px;top:297.00px;font:400 21px/23px 'Liberation Sans', sans-serif;color:#8a8a8a;letter-spacing:0.727px;-webkit-text-stroke:0.5px #8a8a8a;">Sensitivity</div>
<div class="t" style="left:2751.50px;top:297.00px;font:400 21px/23px 'Liberation Sans', sans-serif;color:#ffffff;letter-spacing:1.133px;-webkit-text-stroke:0.5px #ffffff;">Add-ins</div>
<div class="t" style="left:2880.70px;top:297.00px;font:400 21px/23px 'Liberation Sans', sans-serif;color:#ffffff;letter-spacing:0.445px;-webkit-text-stroke:0.5px #ffffff;">Analyse</div>
<div class="t" style="left:2895.60px;top:321.00px;font:400 21px/23px 'Liberation Sans', sans-serif;color:#ffffff;letter-spacing:0.407px;-webkit-text-stroke:0.5px #ffffff;">Data</div>
<div class="t" style="left:19.90px;top:370.00px;font:400 26.3px/30px 'Liberation Sans', sans-serif;color:#e2e2e2;letter-spacing:0.000px;transform:scaleX(0.900);transform-origin:0 0;-webkit-text-stroke:0.3px #e2e2e2;">A2</div>
<div class="t" style="left:375.80px;top:373.00px;font:400 25.2px/28px 'Liberation Sans', sans-serif;color:#fff;letter-spacing:-0.168px;-webkit-text-stroke:0.55px #fff;">Leader</div>
<div class="t" style="left:245.60px;top:438.00px;font:400 41.6px/47px 'Liberation Sans', sans-serif;color:#fff;letter-spacing:0.000px;-webkit-text-stroke:0.35px #fff;">A</div>
<div class="t" style="left:624.40px;top:438.00px;font:400 41.6px/47px 'Liberation Sans', sans-serif;color:#fff;letter-spacing:0.000px;-webkit-text-stroke:0.35px #fff;">B</div>
<div class="t" style="left:973.50px;top:438.00px;font:400 41.6px/47px 'Liberation Sans', sans-serif;color:#fff;letter-spacing:0.000px;-webkit-text-stroke:0.35px #fff;">C</div>
<div class="t" style="left:1295.10px;top:438.00px;font:400 41.6px/47px 'Liberation Sans', sans-serif;color:#fff;letter-spacing:0.000px;-webkit-text-stroke:0.35px #fff;">D</div>
<div class="t" style="left:1692.40px;top:438.00px;font:400 41.6px/47px 'Liberation Sans', sans-serif;color:#fff;letter-spacing:0.000px;-webkit-text-stroke:0.35px #fff;">E</div>
<div class="t" style="left:2083.60px;top:438.00px;font:400 41.6px/47px 'Liberation Sans', sans-serif;color:#fff;letter-spacing:0.000px;-webkit-text-stroke:0.35px #fff;">F</div>
<div class="t" style="left:2568.90px;top:438.00px;font:400 41.6px/47px 'Liberation Sans', sans-serif;color:#fff;letter-spacing:0.000px;-webkit-text-stroke:0.35px #fff;">G</div>
<div class="t" style="left:2996.60px;top:438.00px;font:400 41.6px/47px 'Liberation Sans', sans-serif;color:#fff;letter-spacing:0.000px;-webkit-text-stroke:0.35px #fff;">H</div>
<div class="t" style="left:30.60px;top:503.00px;font:400 42.6px/48px 'Liberation Sans', sans-serif;color:#fff;letter-spacing:0.000px;-webkit-text-stroke:0.35px #fff;">1</div>
<div class="t" style="left:31.10px;top:551.00px;font:400 42.6px/48px 'Liberation Sans', sans-serif;color:#fff;letter-spacing:0.000px;-webkit-text-stroke:0.35px #fff;">2</div>
<div class="t" style="left:31.60px;top:599.00px;font:400 42.6px/48px 'Liberation Sans', sans-serif;color:#fff;letter-spacing:0.000px;-webkit-text-stroke:0.35px #fff;">3</div>
<div class="t" style="left:31.60px;top:647.00px;font:400 42.6px/48px 'Liberation Sans', sans-serif;color:#fff;letter-spacing:0.000px;-webkit-text-stroke:0.35px #fff;">4</div>
<div class="t" style="left:31.60px;top:695.00px;font:400 42.6px/48px 'Liberation Sans', sans-serif;color:#fff;letter-spacing:0.000px;-webkit-text-stroke:0.35px #fff;">5</div>
<div class="t" style="left:31.10px;top:743.00px;font:400 42.6px/48px 'Liberation Sans', sans-serif;color:#fff;letter-spacing:0.000px;-webkit-text-stroke:0.35px #fff;">6</div>
<div class="t" style="left:31.10px;top:791.00px;font:400 42.6px/48px 'Liberation Sans', sans-serif;color:#fff;letter-spacing:0.000px;-webkit-text-stroke:0.35px #fff;">7</div>
<div class="t" style="left:31.60px;top:839.00px;font:400 42.6px/48px 'Liberation Sans', sans-serif;color:#fff;letter-spacing:0.000px;-webkit-text-stroke:0.35px #fff;">8</div>
<div class="t" style="left:31.10px;top:887.00px;font:400 42.6px/48px 'Liberation Sans', sans-serif;color:#fff;letter-spacing:0.000px;-webkit-text-stroke:0.35px #fff;">9</div>
<div class="t" style="left:94.20px;top:513.00px;font:700 31.6px/36px 'Liberation Sans', sans-serif;color:#000;letter-spacing:0.333px;-webkit-text-stroke:0.25px #000;">Team role</div>
<div class="t" style="left:435.40px;top:513.00px;font:700 31.6px/36px 'Liberation Sans', sans-serif;color:#000;letter-spacing:0.256px;-webkit-text-stroke:0.25px #000;">Personal identity number</div>
<div class="t" style="left:852.80px;top:513.00px;font:700 31.6px/36px 'Liberation Sans', sans-serif;color:#000;letter-spacing:0.257px;-webkit-text-stroke:0.25px #000;">Gender</div>
<div class="t" style="left:1136.50px;top:513.00px;font:700 31.6px/36px 'Liberation Sans', sans-serif;color:#000;letter-spacing:-0.323px;-webkit-text-stroke:0.25px #000;">First name</div>
<div class="t" style="left:1496.50px;top:513.00px;font:700 31.6px/36px 'Liberation Sans', sans-serif;color:#000;letter-spacing:-0.100px;-webkit-text-stroke:0.25px #000;">Last name</div>
<div class="t" style="left:1928.50px;top:513.00px;font:700 31.6px/36px 'Liberation Sans', sans-serif;color:#000;letter-spacing:0.657px;-webkit-text-stroke:0.25px #000;">Phone number</div>
<div class="t" style="left:2276.20px;top:513.00px;font:700 31.6px/36px 'Liberation Sans', sans-serif;color:#000;letter-spacing:0.473px;-webkit-text-stroke:0.25px #000;">E-mail</div>
<div class="t" style="left:2906.30px;top:513.00px;font:700 31.6px/36px 'Liberation Sans', sans-serif;color:#000;letter-spacing:-0.550px;-webkit-text-stroke:0.25px #000;">Shirt number</div>
<div class="t" style="left:93.60px;top:562.00px;font:400 31px/35px 'Liberation Sans', sans-serif;color:#000;letter-spacing:0.739px;-webkit-text-stroke:0.3px #000;">Leader</div>
<div class="t" style="left:93.60px;top:610.00px;font:400 26.5px/30px 'Liberation Sans', sans-serif;color:#e4e4e4;letter-spacing:-0.258px;-webkit-text-stroke:0.4px #e4e4e4;">Player</div>
<div class="t" style="left:93.60px;top:648.00px;font:400 26.5px/30px 'Liberation Sans', sans-serif;color:#b6b8b6;letter-spacing:0.002px;-webkit-text-stroke:0.4px #b6b8b6;">Leader</div>
</div>
</body></html>
